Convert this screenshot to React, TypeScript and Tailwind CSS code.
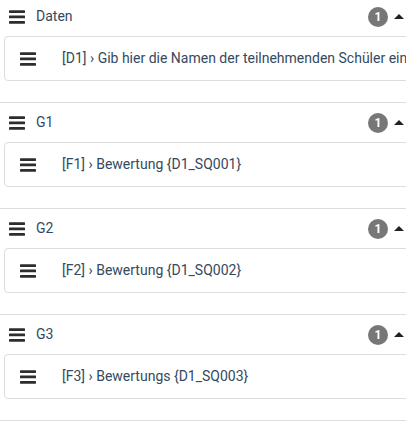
import React from 'react';

const groups = [
  { title: 'Daten', count: 1, q: '[D1] › Gib hier die Namen der teilnehmenden Schüler ein' },
  { title: 'G1', count: 1, q: '[F1] › Bewertung {D1_SQ001}' },
  { title: 'G2', count: 1, q: '[F2] › Bewertung {D1_SQ002}' },
  { title: 'G3', count: 1, q: '[F3] › Bewertungs {D1_SQ003}' },
];

function Bars() {
  return (
    <svg width="16" height="14" viewBox="0 0 16 14" className="shrink-0">
      <rect x="0" y="0.3" width="16" height="2.7" rx="0.4" fill="#2d2d2d" />
      <rect x="0" y="5.6" width="16" height="2.7" rx="0.4" fill="#2d2d2d" />
      <rect x="0" y="11" width="16" height="2.7" rx="0.4" fill="#2d2d2d" />
    </svg>
  );
}

function Caret() {
  return (
    <svg width="10" height="5" viewBox="0 0 10 5" className="shrink-0">
      <path d="M0 5 L5 0 L10 5 Z" fill="#222" />
    </svg>
  );
}

export default function App() {
  return (
    <div className="w-full h-[423px] overflow-hidden bg-white text-[14px] text-[#34495e]" style={{ fontFamily: 'Roboto, "Liberation Sans", sans-serif' }}>
      <div className="-mt-1">
        {groups.map(g => (
          <div key={g.title} className="border-t border-[#dddddd] pb-[21px]">
            {/* group header */}
            <div className="h-[39px] flex items-center pl-[9px] pr-[2px]">
              <Bars />
              <span className="ml-[11px]">{g.title}</span>
              <div className="ml-auto flex items-center gap-[6px]">
                <span className="w-[20px] h-[20px] rounded-full bg-[#777777] text-white text-[12px] font-bold flex items-center justify-center">{g.count}</span>
                <Caret />
              </div>
            </div>
            {/* question card */}
            <div className="ml-[4px] w-[440px] h-[45px] border border-[#dddddd] rounded-[4px] flex items-center pl-[15px] whitespace-nowrap">
              <Bars />
              <span className="ml-[26px]">{g.q}</span>
            </div>
          </div>
        ))}
        <div className="border-t border-[#dddddd]" />
      </div>
    </div>
  );
}
